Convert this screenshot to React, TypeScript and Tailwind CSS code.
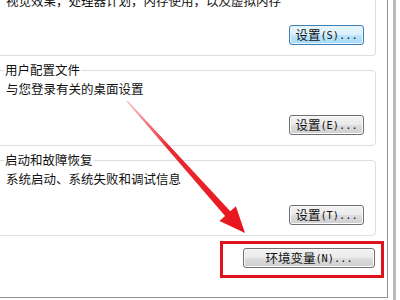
import type { ReactNode } from "react";

interface WinButtonProps {
  label: string;
  accel: string;
  width: string;
  focused?: boolean;
}

function WinButton({ label, accel, width, focused }: WinButtonProps) {
  return (
    <button
      className={`${width} h-[20px] flex items-center justify-center rounded-[3px] border text-[12.5px] leading-[14px] text-[#111] ${
        focused
          ? "border-[#3c7fb1] bg-[linear-gradient(to_bottom,#eaf6fd_0%,#d9f0fc_50%,#bee6fd_50%,#a7d9f5_100%)] shadow-[inset_0_0_0_1px_#e6f5fd]"
          : "border-[#707070] bg-[linear-gradient(to_bottom,#f2f2f2_0%,#ebebeb_50%,#dddddd_50%,#cfcfcf_100%)] shadow-[inset_0_0_0_1px_#fbfbfb]"
      }`}
    >
      <span>{label}</span>
      <span className="font-['DejaVu_Sans_Mono',monospace] text-[10.3px]">({accel})...</span>
    </button>
  );
}

function GroupBox({ title, children }: { title: string; children: ReactNode }) {
  return (
    <fieldset className="mt-[7px] ml-[-4px] border border-[#d5dfe5] rounded-[4px] pl-[9px] pr-[11px] pb-[10px]">
      <legend className="ml-[-2px] px-[1px] leading-[14px]">{title}</legend>
      {children}
    </fieldset>
  );
}

export default function App() {
  return (
    <div className="relative w-[400px] h-[300px] overflow-hidden bg-white font-['Noto_Sans_CJK_SC','Noto_Sans',sans-serif] text-[12.5px] leading-[14px] text-[#111]">
      <div className="flex h-full">
        {/* tab page */}
        <div className="w-[388px] h-[298px] border-r border-b border-[#8e9197] flex flex-col pr-[11px]">
          {/* performance group, top is cut off */}
          <div className="mt-[-6px] ml-[-4px] border-x border-b border-[#d5dfe5] rounded-b-[4px] pl-[9px] pr-[11px] pb-[10px]">
            <div className="whitespace-nowrap">视觉效果，处理器计划，内存使用，以及虚拟内存</div>
            <div className="flex justify-end mt-[17px]">
              <WinButton label="设置" accel="S" width="w-[75px]" focused />
            </div>
          </div>

          <GroupBox title="用户配置文件">
            <div className="pt-[5px]">与您登录有关的桌面设置</div>
            <div className="flex justify-end mt-[19px]">
              <WinButton label="设置" accel="E" width="w-[75px]" />
            </div>
          </GroupBox>

          <GroupBox title="启动和故障恢复">
            <div className="pt-[5px]">系统启动、系统失败和调试信息</div>
            <div className="flex justify-end mt-[19px]">
              <WinButton label="设置" accel="T" width="w-[75px]" />
            </div>
          </GroupBox>

          <div className="flex justify-end mt-[12px] mr-[1px]">
            <WinButton label="环境变量" accel="N" width="w-[132px]" />
          </div>
        </div>
        <div className="w-[5px]" />
        <div className="w-[3px] h-full bg-[#b9b9b9]" />
      </div>

      {/* annotation: highlight box */}
      <div className="absolute left-[220px] top-[241px] w-[164px] h-[37px] border-[3px] border-[#e0121b]" />

      {/* annotation: arrow */}
      <svg className="absolute left-0 top-0 pointer-events-none" width="400" height="300" viewBox="0 0 400 300">
        <defs>
          <linearGradient id="arrowFade" x1="127" y1="101" x2="245" y2="233" gradientUnits="userSpaceOnUse">
            <stop offset="0" stopColor="#e8141c" stopOpacity="0.25" />
            <stop offset="0.35" stopColor="#e8141c" stopOpacity="0.9" />
            <stop offset="1" stopColor="#e8141c" />
          </linearGradient>
        </defs>
        <polygon
          points="126.5,101.5 225.1,215.9 219.5,220.9 245,233 235.9,206.3 230.3,211.3 127.5,100.5"
          fill="url(#arrowFade)"
        />
      </svg>
    </div>
  );
}
